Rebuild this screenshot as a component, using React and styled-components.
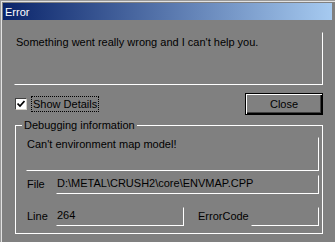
import React from "react";
import styled, { createGlobalStyle } from "styled-components";

const GlobalStyle = createGlobalStyle`
  html, body {
    margin: 0;
    padding: 0;
    background: #808080;
  }
  body {
    font-family: "Liberation Sans", Arial, sans-serif;
    font-size: 11px;
    color: #000;
  }
`;

const Window = styled.div`
  width: 335px;
  height: 242px;
  box-sizing: border-box;
  padding-top: 3px;
  background: #808080;
  box-shadow: inset 1px 1px #9a9a9a, inset 2px 2px #e2e2e2;
  overflow: hidden;
`;

const TitleBar = styled.div`
  height: 17px;
  margin: 0 3px;
  padding-left: 2px;
  box-sizing: border-box;
  background: linear-gradient(to right, #0a246a, #a6caf0);
  color: #fff;
  line-height: 18px;
`;

const sunken = `
  box-sizing: border-box;
  border-style: solid;
  border-width: 1px;
  border-color: #808080 #fff #fff #808080;
`;

const MessagePanel = styled.div`
  ${sunken}
  margin: 12px 0 0 14px;
  width: 309px;
  height: 53px;
  padding: 3px 1px;
  line-height: 13px;
`;

const ActionRow = styled.div`
  display: flex;
  align-items: center;
  justify-content: space-between;
  margin: 8px 0 0 15px;
  width: 308px;
  height: 22px;
`;

const CheckWrap = styled.div`
  display: flex;
  align-items: center;
`;

const CheckBox = styled.span`
  display: flex;
  align-items: center;
  justify-content: center;
  width: 12px;
  height: 12px;
  box-sizing: border-box;
  background: #fff;
  border-style: solid;
  border-width: 1px;
  border-color: #404040 #d4d0c8 #d4d0c8 #404040;
`;

const CheckLabel = styled.span`
  margin-left: 4px;
  padding: 1px 1px;
  border: 1px dotted #000;
  line-height: 12px;
`;

const Button = styled.button`
  width: 78px;
  height: 22px;
  box-sizing: border-box;
  padding: 0;
  font: inherit;
  color: #000;
  background: #808080;
  border: 1px solid #000;
  box-shadow: inset 1px 1px #fff, inset -1px -1px #000, inset -2px -2px #404040;
`;

const Group = styled.fieldset`
  margin: 4px 0 0 15px;
  width: 308px;
  box-sizing: border-box;
  padding: 0 3px 7px 10px;
  border: 1px solid #fff;
  min-width: 0;
`;

const Legend = styled.legend`
  margin-left: -4px;
  padding: 0 2px;
  line-height: 13px;
`;

const DetailPanel = styled.div`
  ${sunken}
  margin-top: 5px;
  height: 34px;
  padding: 0 0;
  line-height: 13px;
`;

const FieldRow = styled.div`
  display: flex;
  align-items: center;
  margin-top: ${(p) => p.$gap}px;
  height: 19px;
`;

const Label = styled.span`
  width: ${(p) => p.$width}px;
  padding-left: ${(p) => p.$indent}px;
  box-sizing: border-box;
  flex: none;
  line-height: 13px;
`;

const Field = styled.div`
  ${sunken}
  height: 19px;
  width: ${(p) => (p.$width ? `${p.$width}px` : "auto")};
  flex: ${(p) => (p.$width ? "none" : "1")};
  line-height: 13px;
  padding-top: 1px;
`;

const Check = () => (
  <svg width="8" height="8" viewBox="0 0 8 8">
    <path d="M0.5 3.5 L3 6 L7.5 1" fill="none" stroke="#000" strokeWidth="1.7" />
  </svg>
);

export default function App() {
  return (
    <>
      <GlobalStyle />
      <Window>
        <TitleBar>Error</TitleBar>
        <MessagePanel>Something went really wrong and I can't help you.</MessagePanel>
        <ActionRow>
          <CheckWrap>
            <CheckBox>
              <Check />
            </CheckBox>
            <CheckLabel>Show Details</CheckLabel>
          </CheckWrap>
          <Button>Close</Button>
        </ActionRow>
        <Group>
          <Legend>Debugging information</Legend>
          <DetailPanel>Can't environment map model!</DetailPanel>
          <FieldRow $gap={4}>
            <Label $width={30} $indent={1}>File</Label>
            <Field>D:\METAL\CRUSH2\core\ENVMAP.CPP</Field>
          </FieldRow>
          <FieldRow $gap={13}>
            <Label $width={30} $indent={1}>Line</Label>
            <Field $width={128}>264</Field>
            <Label $width={67} $indent={14}>ErrorCode</Label>
            <Field>{""}</Field>
          </FieldRow>
        </Group>
      </Window>
    </>
  );
}
